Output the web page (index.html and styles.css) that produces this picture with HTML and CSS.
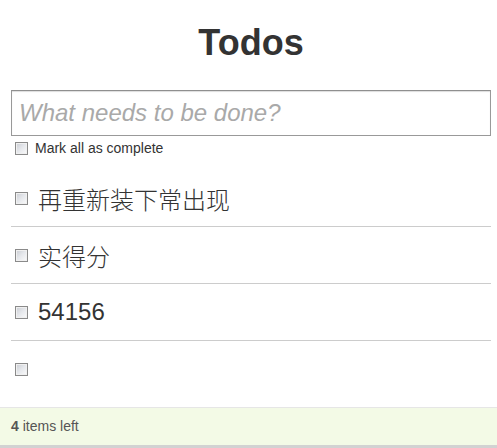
FILE: index.html
```html
<!DOCTYPE html>
<html>
<head>
<meta charset="utf-8">
<title>Todos</title>
<link rel="stylesheet" href="styles.css">
</head>
<body>
<div class="app">
  <h1 class="title">Todos</h1>
  <input class="new-todo" type="text" placeholder="What needs to be done?">
  <div class="mark-all">
    <input class="check" type="checkbox" id="toggle-all">
    <label class="mark-all-label" for="toggle-all">Mark all as complete</label>
  </div>
  <ul class="todo-list">
    <li class="todo"><input class="check" type="checkbox"><span class="todo-text">再重新装下常出现</span></li>
    <li class="todo"><input class="check" type="checkbox"><span class="todo-text">实得分</span></li>
    <li class="todo"><input class="check" type="checkbox"><span class="todo-text">54156</span></li>
    <li class="todo"><input class="check" type="checkbox"><span class="todo-text"></span></li>
  </ul>
</div>
<footer class="footer"><span class="count"><b>4</b> items left</span></footer>
</body>
</html>
```

FILE: styles.css
```css
html, body {
  margin: 0;
  padding: 0;
  background: #fff;
}
body {
  font-family: "Liberation Sans", "Noto Sans CJK SC", sans-serif;
  color: #333;
  height: 448px;
  display: flex;
  flex-direction: column;
}
.app {
  width: 480px;
  padding-left: 11px;
}
.title {
  margin: 25px 0 30px;
  font-size: 36px;
  line-height: 35px;
  font-weight: bold;
  text-align: center;
  color: #333;
}
.new-todo {
  display: block;
  box-sizing: border-box;
  width: 480px;
  height: 46px;
  margin: 0;
  padding: 0 7px;
  border: 1px solid #999;
  border-top-color: #8f8f8f;
  box-shadow: inset 0 1px 1px #ddd;
  font-family: "Liberation Sans", sans-serif;
  font-size: 24px;
  font-style: italic;
  color: #333;
  outline: none;
}
.new-todo::placeholder {
  color: #a9a9a9;
  font-style: italic;
}
.mark-all {
  display: flex;
  align-items: center;
  height: 13px;
  margin-top: 6px;
  padding-left: 4px;
}
.check {
  appearance: none;
  -webkit-appearance: none;
  box-sizing: border-box;
  width: 13px;
  height: 13px;
  margin: 0;
  flex: none;
  border: 1px solid #8a8a8a;
  background: linear-gradient(135deg, #c9ccd2 0%, #e6e8ec 50%, #fbfbfb 100%);
  box-shadow: inset 0 0 0 1px #f0f0f0;
}
.mark-all-label {
  margin-left: 7px;
  font-size: 14px;
  line-height: 13px;
  color: #333;
}
.todo-list {
  list-style: none;
  margin: 15px 0 0;
  padding: 0;
}
.todo {
  display: flex;
  align-items: center;
  height: 56px;
  padding-left: 4px;
  border-bottom: 1px solid #ccc;
}
.todo:last-child {
  border-bottom: none;
}
.todo-text {
  margin-left: 10px;
  font-size: 24px;
  color: #333;
  font-family: "Liberation Sans", "Noto Sans CJK SC", sans-serif;
  font-weight: 300;
}
.footer {
  margin-top: 10px;
  height: 37px;
  border-top: 1px solid #e6e6e6;
  border-bottom: 3px solid #d2d2d2;
  background: #f3fae6;
  padding-left: 11px;
  font-size: 14px;
  line-height: 36px;
  color: #555;
}
.count b {
  font-weight: bold;
  color: #555;
}
```
